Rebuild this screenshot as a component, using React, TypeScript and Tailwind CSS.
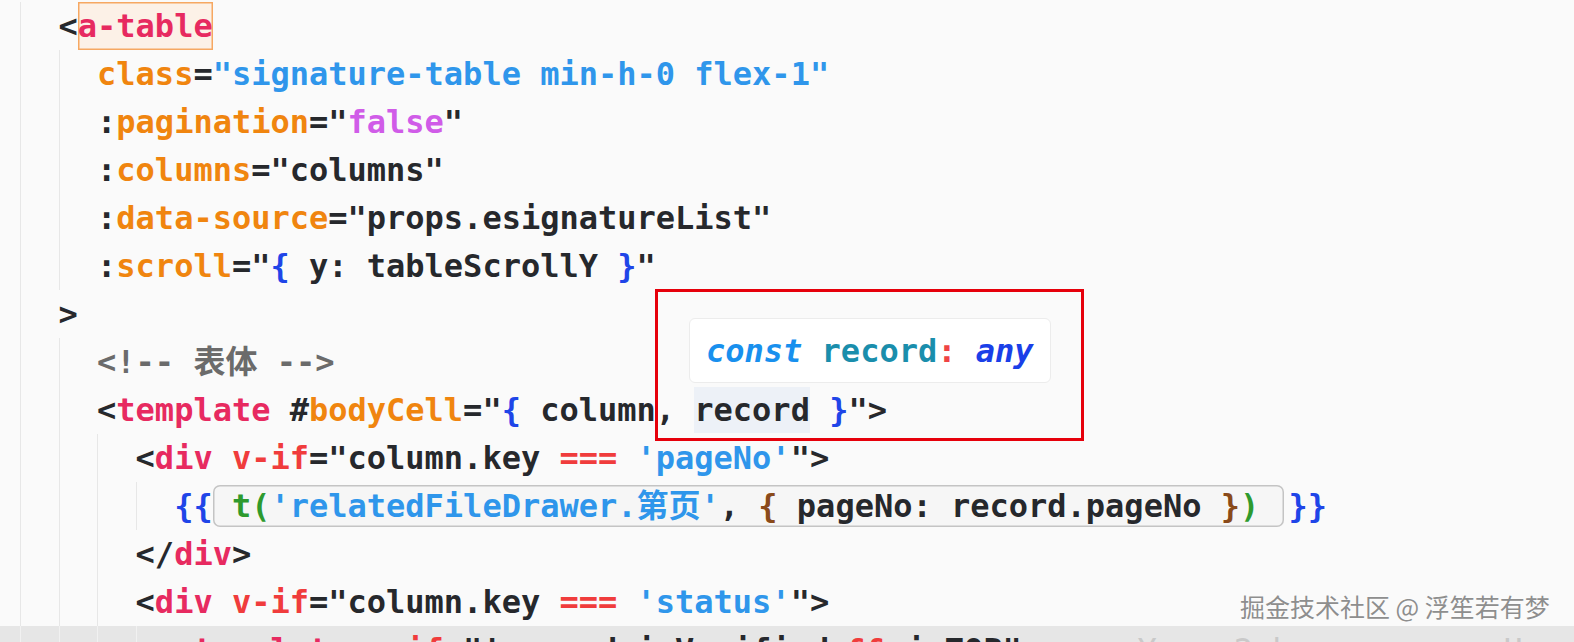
import React from "react"

const C: Record<string, string> = {
  d: "text-[#26282c]",
  tag: "text-[#e72a60]",
  attr: "text-[#f0850f]",
  str: "text-[#2f96eb]",
  kw: "text-[#d05ce8]",
  br: "text-[#1f45e8]",
  red: "text-[#f03c3c]",
  green: "text-[#2e9a2e]",
  brown: "text-[#8a4a1a]",
  cm: "text-[#6b6b6b]",
  ghost: "text-[#c9c9c9] font-normal",
}

function T({ c, children }: { c: string; children: React.ReactNode }) {
  return <span className={C[c]}>{children}</span>
}

function Line({
  indent,
  children,
  band = false,
}: {
  indent: number
  children: React.ReactNode
  band?: boolean
}) {
  return (
    <div className={`flex h-[48px] items-stretch whitespace-pre pl-[20px] ${band ? "bg-[#e6e6e6]" : ""}`}>
      {Array.from({ length: indent }).map((_, i) => (
        <span
          key={i}
          className={`w-[2ch] shrink-0 border-l ${band ? "border-[#f1f1f1]" : "border-[#e7e7e7]"}`}
        />
      ))}
      <div className="flex items-center">{children}</div>
    </div>
  )
}

export default function App() {
  return (
    <div className="relative h-[642px] w-[1574px] overflow-hidden bg-[#fafafa]">
      <div className="pt-[2px] text-[32px] font-bold [font-family:'DejaVu_Sans_Mono','Noto_Sans_CJK_SC',monospace]">
        <Line indent={1}>
          <T c="d">{"<"}</T>
          <span className="flex items-center self-stretch bg-[#fcf1e7] text-[#e72a60] ring-[1.5px] ring-inset ring-[#f6a862]">
            a-table
          </span>
        </Line>
        <Line indent={2}>
          <T c="attr">class</T>
          <T c="d">=</T>
          <T c="str">"signature-table min-h-0 flex-1"</T>
        </Line>
        <Line indent={2}>
          <T c="d">:</T>
          <T c="attr">pagination</T>
          <T c="d">="</T>
          <T c="kw">false</T>
          <T c="d">"</T>
        </Line>
        <Line indent={2}>
          <T c="d">:</T>
          <T c="attr">columns</T>
          <T c="d">="columns"</T>
        </Line>
        <Line indent={2}>
          <T c="d">:</T>
          <T c="attr">data-source</T>
          <T c="d">="props.esignatureList"</T>
        </Line>
        <Line indent={2}>
          <T c="d">:</T>
          <T c="attr">scroll</T>
          <T c="d">="</T>
          <T c="br">{"{"}</T>
          <T c="d"> y: tableScrollY </T>
          <T c="br">{"}"}</T>
          <T c="d">"</T>
        </Line>
        <Line indent={1}>
          <T c="d">{">"}</T>
        </Line>
        <Line indent={2}>
          <T c="cm">{"<!-- 表体 -->"}</T>
        </Line>
        <Line indent={2}>
          <T c="d">{"<"}</T>
          <T c="tag">template</T>
          <T c="d"> #</T>
          <T c="attr">bodyCell</T>
          <T c="d">="</T>
          <T c="br">{"{"}</T>
          <T c="d"> column, </T>
          <span className="my-[1px] flex items-center self-stretch bg-[#edf1f7] text-[#26282c]">record</span>
          <T c="d"> </T>
          <T c="br">{"}"}</T>
          <T c="d">{'">'}</T>
        </Line>
        <Line indent={3}>
          <T c="d">{"<"}</T>
          <T c="tag">div</T>
          <T c="d"> </T>
          <T c="red">v-if</T>
          <T c="d">="column.key </T>
          <T c="red">===</T>
          <T c="d"> </T>
          <T c="str">'pageNo'</T>
          <T c="d">{'">'}</T>
        </Line>
        <Line indent={4}>
          <T c="br">{"{{"}</T>
          <span className="my-[3px] flex items-center self-stretch rounded-[7px] bg-[#f6f6f6] pr-[6px] ring-[1.5px] ring-inset ring-[#c4c4c4]">
            <T c="d"> </T>
            <T c="green">t(</T>
            <T c="str">'relatedFileDrawer.第页'</T>
            <T c="d">, </T>
            <T c="brown">{"{"}</T>
            <T c="d"> pageNo: record.pageNo </T>
            <T c="brown">{"}"}</T>
            <T c="green">)</T>
            <T c="d"> </T>
          </span>
          <span className="pl-[4px] text-[#1f45e8]">{"}}"}</span>
        </Line>
        <Line indent={3}>
          <T c="d">{"</"}</T>
          <T c="tag">div</T>
          <T c="d">{">"}</T>
        </Line>
        <Line indent={3}>
          <T c="d">{"<"}</T>
          <T c="tag">div</T>
          <T c="d"> </T>
          <T c="red">v-if</T>
          <T c="d">="column.key </T>
          <T c="red">===</T>
          <T c="d"> </T>
          <T c="str">'status'</T>
          <T c="d">{'">'}</T>
        </Line>
        <Line indent={4} band>
          <T c="d">{"<"}</T>
          <T c="tag">template</T>
          <T c="d"> </T>
          <T c="red">v-if</T>
          <T c="d">="!record.isVerified </T>
          <T c="red">&&</T>
          <T c="d"> isTOP"</T>
          <T c="d">{">"}</T>
          <T c="ghost">     You, 2 hours ago • Uncommitted changes</T>
        </Line>
      </div>

      {/* hover tooltip */}
      <div className="absolute left-[689px] top-[318px] flex h-[65px] w-[362px] items-center rounded-[6px] border border-[#ececec] bg-white pl-[16px] text-[32px] font-bold whitespace-pre [font-family:'DejaVu_Sans_Mono',monospace]">
        <span className="italic text-[#1890ee]">const</span>
        <span> </span>
        <span className="text-[#1a8eac]">record</span>
        <span className="text-[#ef4444]">:</span>
        <span> </span>
        <span className="italic text-[#1a3fe8]">any</span>
      </div>

      {/* annotation box */}
      <div className="absolute left-[655px] top-[289px] h-[152px] w-[429px] border-[3px] border-[#e6000b]" />

      {/* watermark */}
      <div className="absolute left-[1240px] top-[588px] text-[25px] text-[#8e8e8e] whitespace-pre [font-family:'Noto_Sans_CJK_SC',sans-serif] [text-shadow:0_0_2px_#ffffff,0_0_1px_#ffffff]">
        掘金技术社区 @ 浮笙若有梦
      </div>
    </div>
  )
}
